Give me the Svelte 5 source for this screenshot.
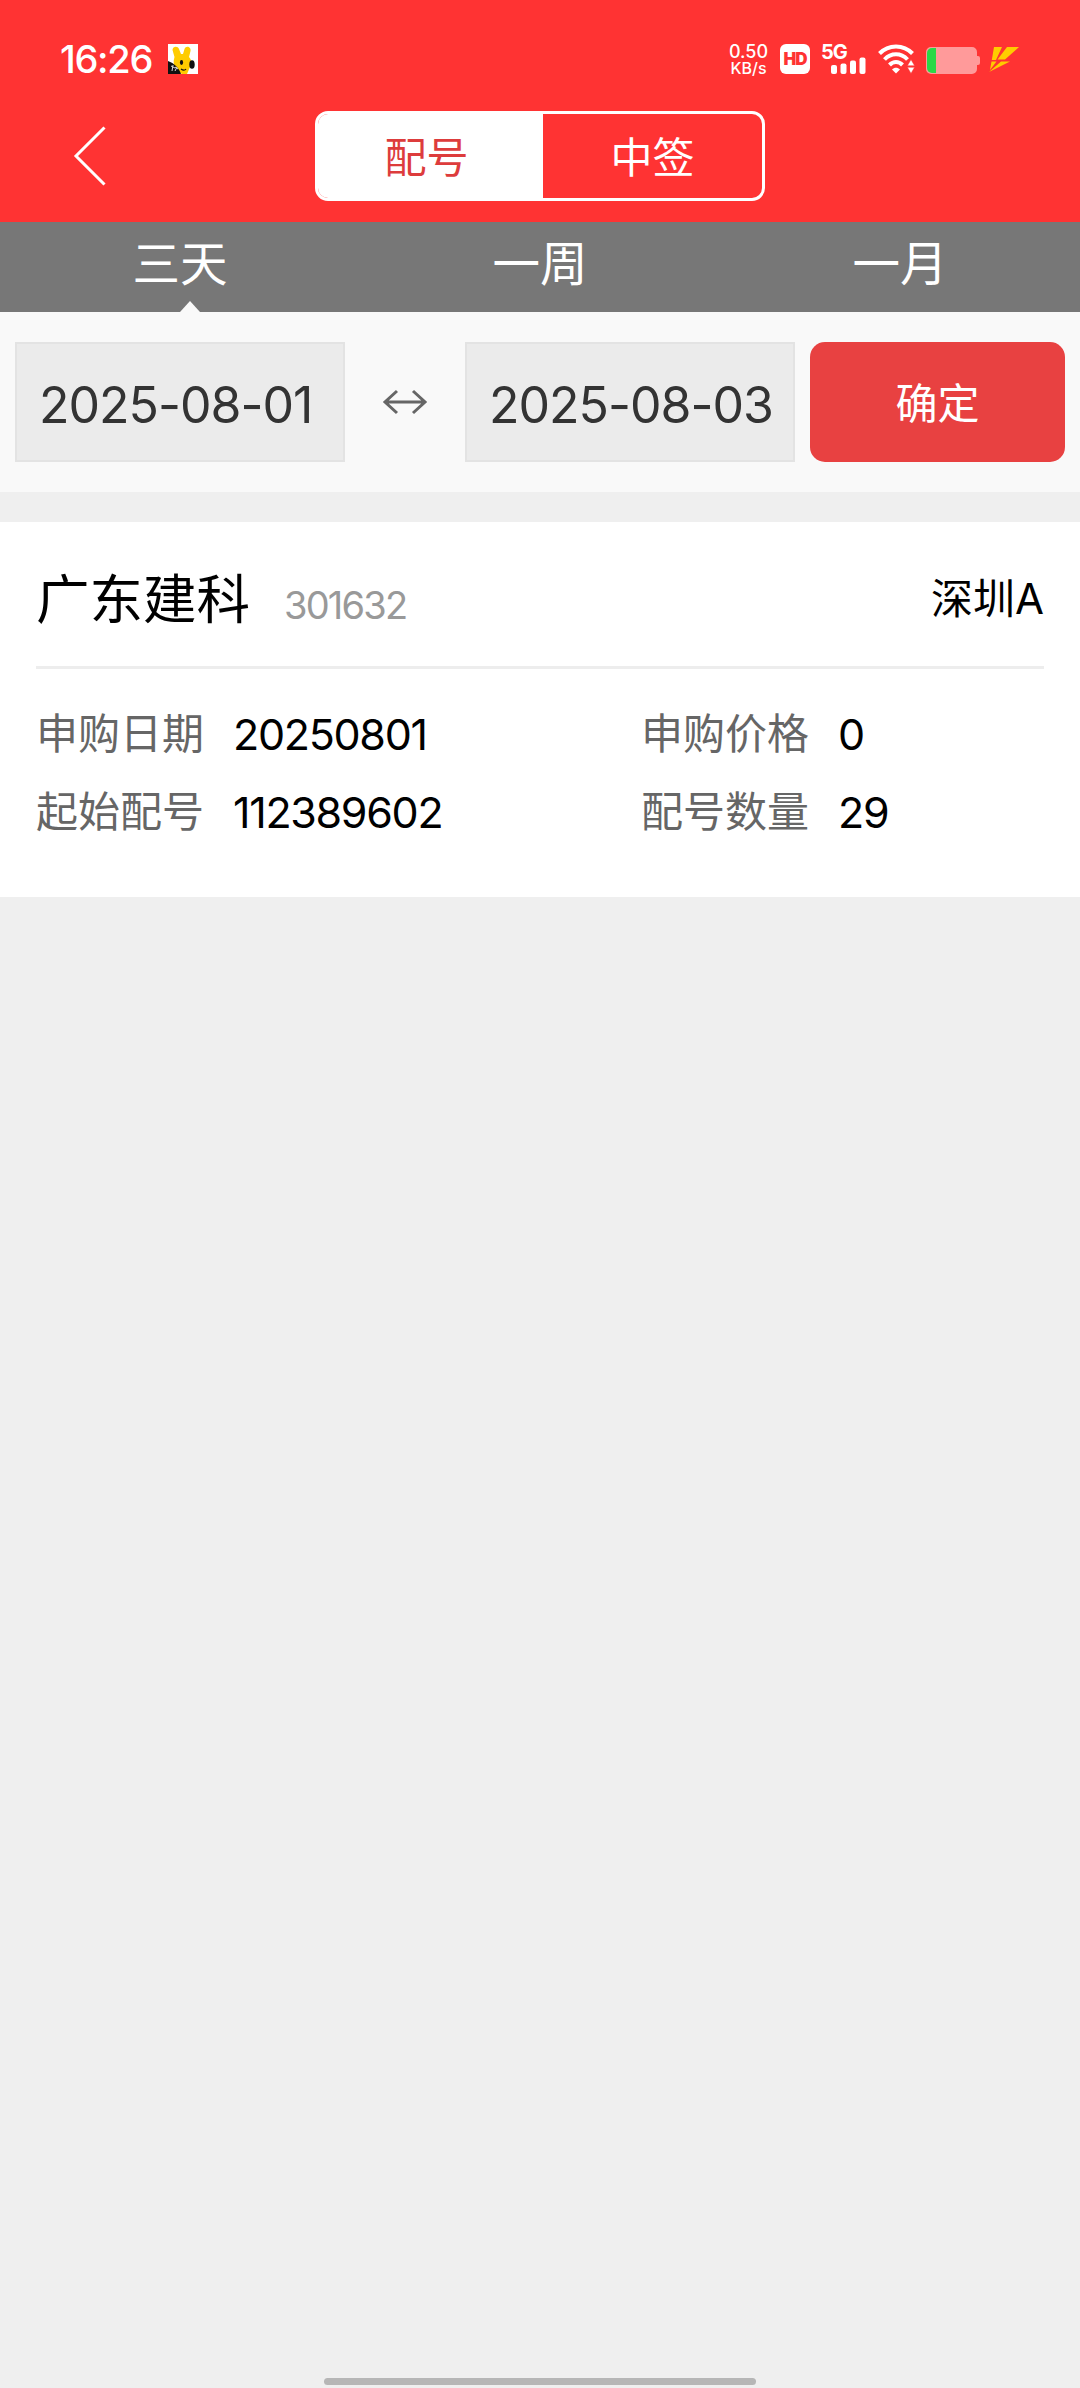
<script>
  let activeType = 0;
  let activeRange = 0;
  let startDate = '2025-08-01';
  let endDate = '2025-08-03';

  const types = ['配号', '中签'];
  const ranges = ['三天', '一周', '一月'];

  const records = [
    {
      name: '广东建科',
      code: '301632',
      market: '深圳A',
      fields: [
        { label: '申购日期', value: '20250801' },
        { label: '申购价格', value: '0' },
        { label: '起始配号', value: '112389602' },
        { label: '配号数量', value: '29' },
      ],
    },
  ];
</script>

<div class="app">
  <header>
    <div class="status-bar">
      <span class="clock">16:26</span>
      <svg class="app-badge" width="30" height="30" viewBox="0 0 30 30">
        <rect width="30" height="30" fill="#fff" />
        <path d="M4.500 6c0-4 5.500-4.500 6.500-1l2 5h2l1.500-5c1.500-4 7-2 6 2l-1.500 6c3 3 3 7 1 10l-3 7h-5C9 28 3.500 22 6.500 13Z" fill="#fc0" />
        <path d="M0 17c6 2 11 7 13 13H0Z" fill="#111" />
        <path d="m3 22 4 2m-2-3-1 6m3-4 3 2m-3 2 2-4" stroke="#ddd" fill="none" />
        <ellipse cx="13.500" cy="18.500" rx="1.600" ry="2.400" fill="#111" />
        <ellipse cx="24" cy="20.500" rx="2.700" ry="4.300" fill="#111" />
        <path d="M13 25c2 1.500 4 1.500 5 0" stroke="#111" stroke-width="1.200" fill="none" />
      </svg>
      <div class="status-right">
        <div class="speed">
          <span>0.50</span>
          <span class="unit">KB/s</span>
        </div>
        <span class="hd">HD</span>
        <div class="signal">
          <span>5G</span>
          <svg width="36" height="17" viewBox="0 0 36 17" fill="#fff">
            <rect x="1" y="8" width="6" height="9" rx="2" />
            <rect x="10.500" y="6.500" width="6" height="10.500" rx="2" />
            <rect x="20" y="3.500" width="6" height="13.500" rx="2" />
            <rect x="29.500" y="0.500" width="6" height="16.500" rx="2" />
          </svg>
        </div>
        <svg class="wifi" width="37" height="30" viewBox="0 0 37 30">
          <g fill="none" stroke="#fff" stroke-width="4">
            <path d="M1.500 9.500C10.500 0 25.500 0 34.500 9.500" />
            <path d="M6.500 15.500C13 8.500 23 8.500 29.500 15.500" />
            <path d="M11.500 21c3.800-4 9.200-4 13 0" />
          </g>
          <path d="m14 25.500c2.500-2.300 5.500-2.300 8 0l-4 4Z" fill="#fff" />
          <path d="m33 15.500 3.600 6.200h-7.200ZM33 29.500l3.600-6.200h-7.200Z" fill="#fff" stroke="#f33" stroke-width="0.500" />
        </svg>
        <svg class="battery" width="54" height="27" viewBox="0 0 54 27">
          <path d="M5 0h41a5 5 0 0 1 5 5v4h1a2 2 0 0 1 2 2v5a2 2 0 0 1-2 2h-1v4a5 5 0 0 1-5 5H5a5 5 0 0 1-5-5V5a5 5 0 0 1 5-5Z" fill="#ff9a9a" />
          <path d="M10 1H6a5 5 0 0 0-5 5v15a5 5 0 0 0 5 5h4Z" fill="#2bd847" />
        </svg>
        <svg class="bolt" width="30" height="25" viewBox="0 0 30 25" fill="#fc0">
          <path d="M5 0h8L7 13H2.800ZM18 0h12L16 12.500H8.500ZM2.500 14.500H7.500L1 23ZM12 14.500H21L0 25Z" />
        </svg>
      </div>
    </div>

    <div class="nav-bar">
      <svg class="back" width="34" height="62" viewBox="0 0 34 62">
        <path d="M31.500 2.500 3 31l28.500 28.500" fill="none" stroke="#fff" stroke-width="3" />
      </svg>
      <div class="segment">
        {#each types as type, i}
          <button class:active={activeType === i} on:click={() => (activeType = i)}>{type}</button>
        {/each}
      </div>
    </div>
  </header>

  <div class="ranges">
    {#each ranges as range, i}
      <button class:active={activeRange === i} on:click={() => (activeRange = i)}>{range}</button>
    {/each}
  </div>

  <div class="filter">
    <div class="date">{startDate}</div>
    <svg class="arrow" width="46" height="26" viewBox="0 0 46 26">
      <path d="M3 13h40M15 2 3 13l12 11M31 2l12 11-12 11" fill="none" stroke="#666" stroke-width="3" />
    </svg>
    <div class="date">{endDate}</div>
    <button class="confirm">确定</button>
  </div>

  {#each records as record}
    <div class="card">
      <div class="card-head">
        <span class="name">{record.name}</span>
        <span class="code">{record.code}</span>
        <span class="market">{record.market}</span>
      </div>
      <div class="fields">
        {#each record.fields as field}
          <div class="field">
            <span class="label">{field.label}</span>
            <span class="value">{field.value}</span>
          </div>
        {/each}
      </div>
    </div>
  {/each}

  <div class="home-bar"></div>
</div>

<style>
  :global(body) {
    background: #efefef;
  }

  .app {
    display: flex;
    flex-direction: column;
    width: 1080px;
    height: 2388px;
    background: #efefef;
    font-family: Inter, 'Noto Sans CJK SC', sans-serif;
    color: #000;
    overflow: hidden;
  }

  button {
    padding: 0;
    border: none;
    background: none;
    color: #fff;
    font-family: inherit;
  }

  header {
    height: 222px;
    background: #f33;
    color: #fff;
  }

  .status-bar {
    display: flex;
    align-items: center;
    height: 111px;
    padding: 7px 60px 0 60px;
    box-sizing: border-box;
    line-height: 1;
  }

  .clock {
    width: 108px;
    font-size: 38px;
    font-weight: 500;
    letter-spacing: -1.3px;
  }

  .status-right {
    display: flex;
    align-items: center;
    margin-left: auto;
  }

  .speed {
    display: flex;
    flex-direction: column;
    align-items: center;
    width: 39px;
    margin-right: 12px;
    padding-top: 2px;
    font-size: 18px;
    font-weight: 500;
    line-height: 16px;
  }

  .unit {
    font-size: 16px;
  }

  .hd {
    width: 30px;
    height: 30px;
    border-radius: 6px;
    background: #fff;
    color: #f33;
    font-size: 17px;
    font-weight: 900;
    line-height: 30px;
    text-align: center;
    letter-spacing: -1px;
  }

  .signal {
    display: flex;
    flex-direction: column;
    width: 46px;
    height: 30px;
    margin-left: 11px;
    font-size: 20px;
    font-weight: 700;
    line-height: 16px;
    letter-spacing: -1px;
  }

  .signal svg {
    margin: -3px 0 0 9px;
  }

  .wifi {
    margin-left: 11px;
  }

  .battery {
    margin: 2px 0 0 11px;
  }

  .bolt {
    margin: 0 1px 0 9px;
  }

  .nav-bar {
    display: flex;
    align-items: center;
    height: 90px;
  }

  .back {
    margin: 0 208px 0 73px;
  }

  .segment {
    display: flex;
    width: 450px;
    height: 90px;
    box-sizing: border-box;
    border: 3px solid #fff;
    border-radius: 13px;
    overflow: hidden;
  }

  .segment button {
    width: 219px;
    font-size: 42px;
    line-height: 87px;
  }

  .segment button:first-child {
    width: 225px;
    padding-right: 8px;
  }

  .segment .active {
    background: #fff;
    color: #dd3c3c;
  }

  .ranges {
    display: flex;
    height: 90px;
    background: #777;
  }

  .ranges button {
    position: relative;
    flex: 1;
    padding-bottom: 6px;
    font-size: 47.500px;
    line-height: 84px;
  }

  .ranges .active::after {
    content: '';
    position: absolute;
    left: 50%;
    bottom: 0;
    border: 10px solid transparent;
    border-top: none;
    border-bottom: 11px solid #f9f9f9;
  }

  .filter {
    display: flex;
    align-items: center;
    height: 180px;
    padding: 0 15px;
    box-sizing: border-box;
    background: #f9f9f9;
  }

  .date {
    width: 330px;
    height: 120px;
    padding-left: 22px;
    box-sizing: border-box;
    border: 2px solid #e3e3e3;
    background: #ebebeb;
    color: #333;
    font-size: 50px;
    line-height: 123px;
    letter-spacing: -1px;
    white-space: nowrap;
  }

  .arrow {
    margin: 0 37px;
  }

  .confirm {
    width: 255px;
    height: 120px;
    margin-left: 15px;
    padding-bottom: 3px;
    border-radius: 15px;
    background: #e84141;
    font-size: 42px;
  }

  .card {
    height: 375px;
    margin-top: 30px;
    padding: 0 36px;
    box-sizing: border-box;
    background: #fff;
  }

  .card-head {
    display: flex;
    align-items: baseline;
    height: 147px;
    box-sizing: border-box;
    border-bottom: 3px solid #ededed;
    line-height: 155px;
  }

  .name {
    font-size: 53.500px;
  }

  .code {
    margin-left: 34px;
    color: #999;
    font-size: 38px;
    letter-spacing: -1.800px;
  }

  .market {
    align-self: flex-start;
    margin-left: auto;
    font-size: 42px;
    line-height: 153px;
  }

  .fields {
    display: grid;
    grid-template-columns: 605px 1fr;
    grid-auto-rows: 78px;
    padding-top: 26px;
    font-size: 42px;
    line-height: 78px;
  }

  .field {
    display: flex;
  }

  .label {
    width: 197px;
    color: #666;
  }

  .value {
    font-size: 43px;
    letter-spacing: -1.300px;
  }

  .home-bar {
    width: 432px;
    height: 7px;
    margin: auto auto 3px;
    border-radius: 4px;
    background: #b6b6b6;
  }
</style>
